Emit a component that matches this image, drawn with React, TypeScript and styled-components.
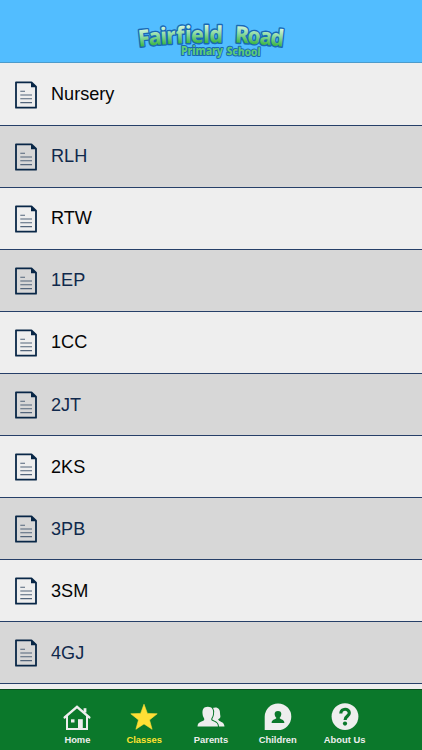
import React from "react";
import styled, { createGlobalStyle } from "styled-components";

const GlobalStyle = createGlobalStyle`
  *, *::before, *::after { box-sizing: border-box; }
  body { margin: 0; overflow: hidden; font-family: "Liberation Sans", Arial, sans-serif; }
`;

const Screen = styled.div`
  display: flex;
  flex-direction: column;
  width: 100%;
  height: 750px;
  overflow: hidden;
  background: #eee;
`;

const Header = styled.header`
  flex: none;
  height: 63px;
  display: flex;
  justify-content: center;
  background: #52bdff;
  border-bottom: 1px solid #4c9bcb;
`;

const List = styled.ul`
  flex: 1;
  min-height: 0;
  margin: 0;
  padding: 0.6px 0 0;
  list-style: none;
  overflow: hidden;
`;

const Row = styled.li<{ $shaded: boolean }>`
  display: flex;
  align-items: center;
  height: 62.08px;
  padding: 0 0 0 15px;
  gap: 14px;
  border-bottom: 1px solid #263f68;
  background: ${(p) => (p.$shaded ? "#d7d7d7" : "#eee")};
  color: ${(p) => (p.$shaded ? "#10294c" : "#050505")};
  font-size: 18.1px;
  line-height: 22px;
`;

const RowIcon = styled.svg`
  flex: none;
  width: 22px;
  height: 28px;
  margin-top: 1px;
`;

const TabBar = styled.nav`
  flex: none;
  height: 61px;
  display: flex;
  justify-content: center;
  background: #0b782b;
  border-top: 1px solid #094d1d;
`;

const Tab = styled.a<{ $active: boolean }>`
  width: 66.8px;
  padding-top: 13px;
  display: flex;
  flex-direction: column;
  align-items: center;
  color: ${(p) => (p.$active ? "#ffe330" : "#eee")};
  font-size: 9.4px;
  font-weight: 700;
  line-height: 12px;
  white-space: nowrap;
`;

const TabIcon = styled.svg`
  width: 28px;
  height: 28px;
  margin-bottom: 3px;
  overflow: visible;
`;

const LogoSvg = styled.svg`
  width: 160px;
  height: 62px;
  font-family: "Noto Sans", "Open Sans", sans-serif;
  font-weight: 800;
`;

type Glyph = [string, number, number, number];

const title: Glyph[] = [
  ["F", 8, 46.7, -6], ["a", 18.3, 45.5, -5], ["i", 30, 44.5, -4], ["r", 35.8, 44, -3],
  ["f", 45.3, 43.5, -2], ["i", 54, 43, 0], ["e", 60, 42.8, 0], ["l", 72.3, 42.5, 0],
  ["d", 78.3, 42.5, 1], ["R", 103.8, 42.6, 3], ["o", 116, 43.4, 4],
  ["a", 128, 44.3, 5], ["d", 138.8, 45.2, 6],
];

const Logo = () => (
  <LogoSvg viewBox="0 0 160 62" aria-label="Fairfield Road Primary School">
    <defs>
      <linearGradient id="leaf" gradientUnits="userSpaceOnUse" x1="0" y1="-17" x2="0" y2="0">
        <stop offset="0" stopColor="#d2f5d8" />
        <stop offset="0.45" stopColor="#8cdaa2" />
        <stop offset="1" stopColor="#3eb544" />
      </linearGradient>
    </defs>
    <g fontSize="23" strokeLinejoin="round" paintOrder="stroke">
      {title.map(([c, x, y, r], i) => (
        <text key={i} transform={`translate(${x} ${y}) rotate(${r}) scale(.92 1)`} fill="url(#leaf)" stroke="#1968b5" strokeWidth="2.8">{c}</text>
      ))}
    </g>
    <g fontSize="11.5" fill="#5dcb76" stroke="#1968b5" strokeWidth="2" strokeLinejoin="round" paintOrder="stroke">
      <text x="50" y="55.2" textLength="42" lengthAdjust="spacingAndGlyphs">Primary</text>
      <text transform="translate(95.5 55) rotate(2)" textLength="34" lengthAdjust="spacingAndGlyphs">School</text>
    </g>
  </LogoSvg>
);

const DocumentIcon = () => (
  <RowIcon viewBox="0 0 22 28" fill="none">
    <path d="M1 1.3H16.5L21 5.6V26.7H1Z" stroke="#092747" strokeWidth="1.8" strokeLinejoin="round" />
    <path d="M16 1V6.2H21.5Z" fill="#092747" />
    <path d="M5.3 10.2H10M5.3 14H17M5.3 17.8H17M5.3 21.6H17" stroke="#53657b" strokeWidth="1.1" />
  </RowIcon>
);

const HomeIcon = () => (
  <g fill="none" stroke="#eee" strokeWidth="2">
    <path d="M1.7 14.4L14 3.9L26.3 14.4" strokeWidth="2.5" strokeLinecap="round" />
    <path d="M4 13V26H24V13" />
    <path d="M22 5.2V9.5" strokeWidth="2.8" />
    <path d="M8 16.3H11.5V19.5H8Z" fill="#eee" stroke="none" />
    <path d="M15 16.2H19.8V26H15Z" fill="#eee" stroke="none" />
  </g>
);

const StarIcon = () => (
  <path fill="#ffdf35" stroke="#ffdf35" strokeWidth=".6" strokeLinejoin="round" d="M14 1.2L17.4 10.4L27.2 10.8L19.5 16.9L22.1 26.3L14 20.9L5.9 26.3L8.5 16.9L.8 10.8L10.6 10.4Z" />
);

const ParentsIcon = () => (
  <g fill="#eee">
    <path d="M15.5 5C20.5 3.3 23.2 6 23 10C23 12.5 24.2 13.8 22.7 15.3L21.2 16.2C21.2 18.8 27.5 18.2 27.5 23.6H20.5C20.1 19.7 15.7 18.8 15 17Z" />
    <path stroke="#0b782b" strokeWidth="2" paintOrder="stroke" d="M.5 23.6C.5 17.7 7.3 19.2 7.3 16.3C7.3 14.8 5.8 13.8 5.6 11.2C5 6.4 6.5 3.7 10.8 3.7C15.1 3.7 16.7 6.4 16 11.2C15.8 13.8 14.2 14.8 14.2 16.3C14.2 19.2 21 17.7 21 23.6Z" />
  </g>
);

const ChildrenIcon = () => (
  <g>
    <path fill="#eee" d="M.7 27V13.5A13.3 13.3 0 1 1 14 27Z" />
    <path fill="#0b782b" d="M7.6 20.1C7.7 15.6 12.3 17 12.3 14.8C10.4 12.7 9.3 7.9 14 7.9C18.7 7.9 17.6 12.7 15.7 14.8C15.7 17 20.3 15.6 20.4 20.1Z" />
  </g>
);

const AboutIcon = () => (
  <g>
    <circle cx="14" cy="13.6" r="13.4" fill="#eee" />
    <path d="M9.8 10.5C9.9 4.8 18.3 5 18.3 10.1C18.3 13.4 14.1 12.9 14.1 17" fill="none" stroke="#0b782b" strokeWidth="3.2" />
    <circle cx="14" cy="20.6" r="2.1" fill="#0b782b" />
  </g>
);

const classes = ["Nursery", "RLH", "RTW", "1EP", "1CC", "2JT", "2KS", "3PB", "3SM", "4GJ"];
const tabs = [
  { label: "Home", Icon: HomeIcon },
  { label: "Classes", Icon: StarIcon },
  { label: "Parents", Icon: ParentsIcon },
  { label: "Children", Icon: ChildrenIcon },
  { label: "About Us", Icon: AboutIcon },
];

export default function App() {
  return (
    <Screen>
      <GlobalStyle />
      <Header><Logo /></Header>
      <List>
        {classes.map((name, i) => (
          <Row key={name} $shaded={i % 2 === 1}><DocumentIcon />{name}</Row>
        ))}
      </List>
      <TabBar>
        {tabs.map(({ label, Icon }) => (
          <Tab key={label} $active={label === "Classes"}>
            <TabIcon viewBox="0 0 28 28"><Icon /></TabIcon>
            {label}
          </Tab>
        ))}
      </TabBar>
    </Screen>
  );
}
